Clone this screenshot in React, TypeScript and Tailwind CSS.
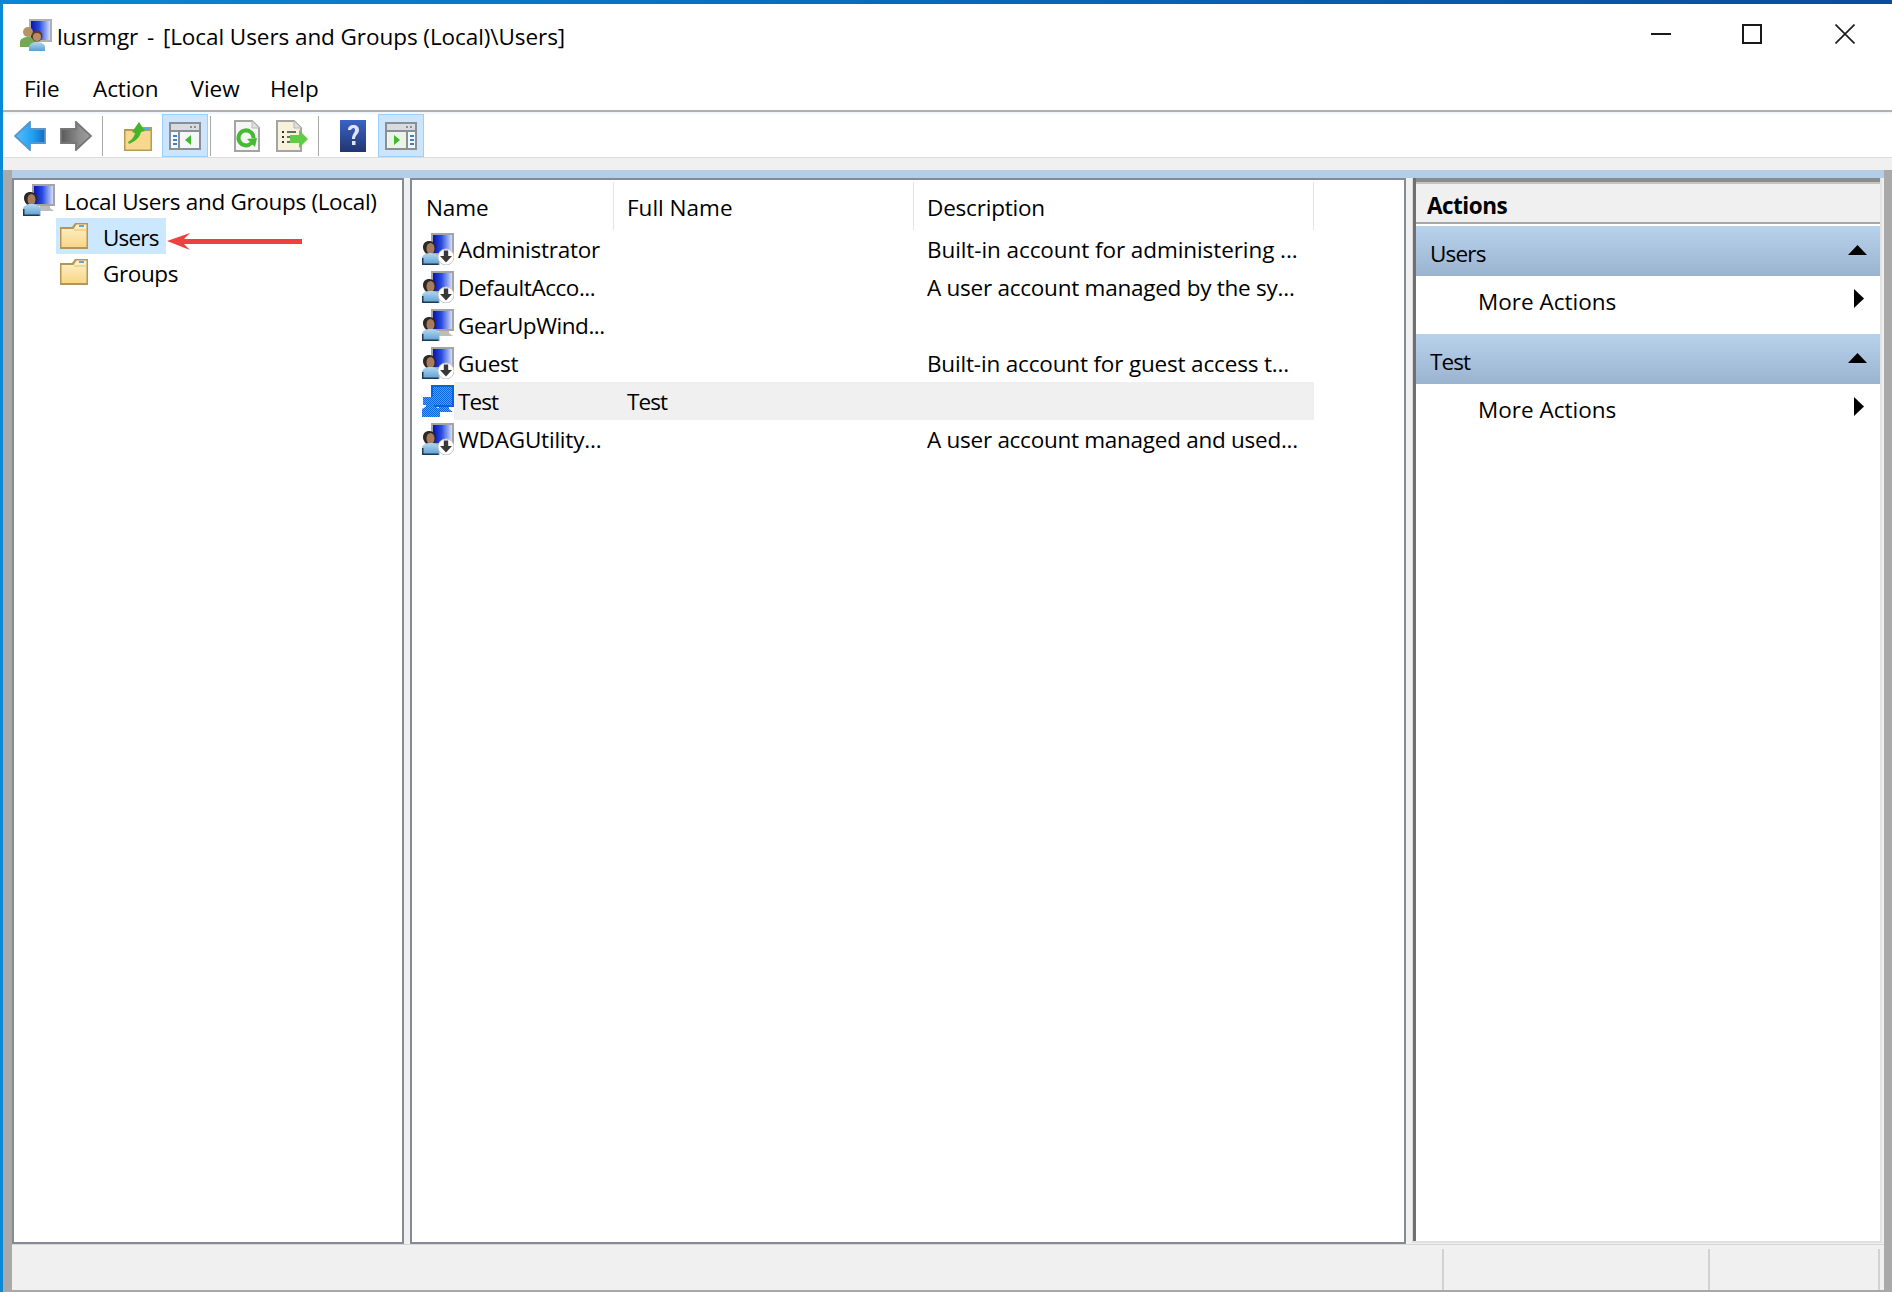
const Monitor = ({ dithered = false }: { dithered?: boolean }) => (
  <>
    <rect x="9" y="0" width="23" height="22" fill={dithered ? "#0a62d8" : "#a4a4a4"} />
    <rect x="11" y="2" width="19" height="18" fill={dithered ? "url(#dither)" : "url(#screen)"} />
    <path d="M17 22h10v2l4 3H15l2-3z" fill={dithered ? "url(#dither)" : "#bdbdbd"} />
  </>
);

const Defs = () => (
  <defs>
    <linearGradient id="screen" x1="0" x2="1" y1="0" y2="0">
      <stop offset="0" stopColor="#0a12b0" />
      <stop offset="0.45" stopColor="#2a4ee0" />
      <stop offset="1" stopColor="#d4dcfb" />
    </linearGradient>
    <linearGradient id="shirt" x1="0" x2="0" y1="0" y2="1">
      <stop offset="0" stopColor="#b4d8f0" />
      <stop offset="1" stopColor="#5a9ed2" />
    </linearGradient>
    <pattern id="dither" width="2" height="2" patternUnits="userSpaceOnUse">
      <rect width="2" height="2" fill="#0a66dc" />
      <rect width="1" height="1" fill="#5c9ce8" />
      <rect x="1" y="1" width="1" height="1" fill="#5c9ce8" />
    </pattern>
  </defs>
);

const UserIcon = ({ badge = false, dithered = false }: { badge?: boolean; dithered?: boolean }) => (
  <svg width="32" height="32" viewBox="0 0 32 32" className="shrink-0">
    <Defs />
    <Monitor dithered={dithered} />
    {dithered ? (
      <>
        <path d="M1 12h13v8h-3v2H4v-2H1z" fill="url(#dither)" />
        <path d="M0 32v-8l5-3h7l6 3v8z" fill="url(#dither)" />
      </>
    ) : (
      <>
        <path d="M1 14c0-4 3-6 6-6s7 2 7 6-2 8-6 8-7-4-7-8z" fill="#2e2822" />
        <ellipse cx="8.500" cy="15.500" rx="4" ry="5.500" fill="#a87c5e" />
        <path d="M0 32v-7c0-3 4-5 8.500-5s9 2 9 5v7z" fill="url(#shirt)" />
        <path d="M0 32v-7h1.500v5.500h15V32z" fill="#1e3a52" />
      </>
    )}
    {badge && (
      <>
        <circle cx="24" cy="24" r="8" fill="#ffffff" stroke="#c8c8c8" />
        <path d="M21.800 17.500h4.400v5.500h3.800l-6 6.500-6-6.500h3.800z" fill="#383838" />
      </>
    )}
  </svg>
);

const TitleIcon = () => (
  <svg width="32" height="32" viewBox="0 0 32 32" className="shrink-0">
    <Defs />
    <rect x="9" y="0" width="23" height="23" fill="#b0b0b0" />
    <rect x="11" y="2" width="19" height="19" fill="url(#screen)" />
    <circle cx="8" cy="13" r="5" fill="#b89260" />
    <path d="M0 28v-5c0-3 4-5 8-5s8 2 8 5v5z" fill="#74a856" />
    <circle cx="17" cy="17" r="5.500" fill="#5c3c24" />
    <circle cx="17" cy="18" r="4" fill="#b98c68" />
    <path d="M9 32v-4c0-3 4-5 8-5s8 2 8 5v4z" fill="url(#shirt)" />
  </svg>
);

const FolderIcon = () => (
  <svg width="28" height="26" viewBox="0 0 28 26" className="shrink-0">
    <defs>
      <linearGradient id="folder" x1="0" x2="0" y1="0" y2="1">
        <stop offset="0" stopColor="#fff2c8" />
        <stop offset="1" stopColor="#f8d68a" />
      </linearGradient>
    </defs>
    <path d="M0 4h12l3-4h13v26H0z" fill="#b4955a" />
    <path d="M1.500 6h12l3-4.500h10V24h-25z" fill="url(#folder)" />
    <rect x="19" y="2" width="5" height="2" fill="#58a8e8" />
    <path d="M14 7h12.500" stroke="#e4c070" />
  </svg>
);

const NavArrow = ({ forward = false }: { forward?: boolean }) => (
  <svg width="32" height="30" viewBox="0 0 32 30" className="shrink-0">
    <defs>
      <linearGradient id="navBlue" x1="0" x2="1" y1="0" y2="0">
        <stop offset="0" stopColor="#58c0fa" />
        <stop offset="0.6" stopColor="#1ea0f2" />
        <stop offset="1" stopColor="#1668c0" />
      </linearGradient>
      <linearGradient id="navGray" x1="0" x2="1" y1="0" y2="0">
        <stop offset="0" stopColor="#5a5a5a" />
        <stop offset="0.6" stopColor="#8c8c8c" />
        <stop offset="1" stopColor="#a0a0a0" />
      </linearGradient>
    </defs>
    {forward ? (
      <path d="M16 1l15 14-15 14v-7H1V8h15z" fill="url(#navGray)" stroke="#777777" strokeWidth="1.800" />
    ) : (
      <path d="M16 1L1 15l15 14v-7h15V8H16z" fill="url(#navBlue)" stroke="#5a96cc" strokeWidth="1.800" />
    )}
  </svg>
);

const UpFolderIcon = () => (
  <svg width="28" height="30" viewBox="0 0 28 30" className="shrink-0">
    <path d="M0 8h14l2-2h12v24H0z" fill="#b89a58" />
    <path d="M1.500 10h25v18.500h-25z" fill="#f8d88c" />
    <rect x="20" y="7" width="5" height="2" fill="#58a8e8" />
    <path d="M4 21c4-2 6-5 7-9l-3-1 7-10 6 9-4 1c-1 5-5 9-12 12z" fill="#46b42a" />
  </svg>
);

const PaneIcon = ({ right = false }: { right?: boolean }) => (
  <svg width="32" height="28" viewBox="0 0 32 28" className="shrink-0">
    <rect x="1" y="1" width="30" height="26" fill="#f4f6f8" stroke="#8a8f96" strokeWidth="2" />
    <rect x="2" y="2" width="28" height="6" fill="#d8dbe0" />
    <rect x="2" y="8" width="28" height="2" fill="#8a8f96" />
    <rect x="21" y="4" width="2" height="2" fill="#8a8f96" />
    <rect x="25" y="4" width="2" height="2" fill="#8a8f96" />
    {right ? (
      <>
        <rect x="3" y="10" width="18" height="16" fill="#eaf3e6" />
        <rect x="21" y="10" width="2" height="16" fill="#8a8f96" />
        <rect x="25" y="13" width="4" height="2" fill="#3a82d0" />
        <rect x="25" y="17" width="4" height="2" fill="#3a82d0" />
        <rect x="25" y="21" width="4" height="2" fill="#3a82d0" />
        <path d="M9 13l6 5-6 5z" fill="#3fb82c" />
      </>
    ) : (
      <>
        <rect x="9" y="10" width="2" height="16" fill="#8a8f96" />
        <rect x="4" y="13" width="4" height="2" fill="#3a82d0" />
        <rect x="4" y="17" width="4" height="2" fill="#3a82d0" />
        <rect x="4" y="21" width="4" height="2" fill="#3a82d0" />
        <path d="M22 13l-6 5 6 5z" fill="#3fb82c" />
      </>
    )}
  </svg>
);

const RefreshIcon = () => (
  <svg width="26" height="32" viewBox="0 0 26 32" className="shrink-0">
    <path d="M1 1h17l7 7v23H1z" fill="#f6f6f4" stroke="#a4a4a4" strokeWidth="2" />
    <path d="M18 1v7h7" fill="#e0e0e0" stroke="#b8b8b8" />
    <path d="M17.500 23a7.500 7.500 0 1 1 2-5" fill="none" stroke="#46ba32" strokeWidth="4" />
    <path d="M13 19l10-1-2 9z" fill="#46ba32" />
  </svg>
);

const ExportIcon = () => (
  <svg width="32" height="32" viewBox="0 0 32 32" className="shrink-0">
    <path d="M1 1h17l7 7v23H1z" fill="#f6f2dc" stroke="#a4a4a4" strokeWidth="2" />
    <path d="M18 1v7h7" fill="#e0e0e0" stroke="#b8b8b8" />
    <path d="M6 12h2M6 17h2M6 22h2" stroke="#303030" strokeWidth="2" />
    <path d="M11 12h9M11 17h5M11 22h5" stroke="#6a6a6a" strokeWidth="2" />
    <path d="M14 15h9v-5l9 9-9 9v-5h-9z" fill="#62cc46" />
  </svg>
);

const HelpIcon = () => (
  <svg width="26" height="32" viewBox="0 0 26 32" className="shrink-0">
    <defs>
      <linearGradient id="helpBook" x1="0" x2="0" y1="0" y2="1">
        <stop offset="0" stopColor="#3a62c8" />
        <stop offset="1" stopColor="#22366e" />
      </linearGradient>
    </defs>
    <rect width="26" height="32" fill="url(#helpBook)" />
    <path
      d="M8 10c0-3 2-5 5.500-5S19 7 19 10c0 4-4 5-4 9h-3c0-5 3-6 3-9 0-1-.5-2-1.500-2S11 9 11 10z"
      fill="#e0e4f4"
    />
    <rect x="12" y="21" width="3.500" height="4" fill="#e0e4f4" />
  </svg>
);

const Separator = () => <div className="w-px h-[40px] bg-[#a8a8a8] shrink-0" />;

const TriangleUp = () => (
  <svg width="19" height="10" viewBox="0 0 19 10" className="shrink-0">
    <path d="M9.500 0L19 10H0z" fill="#000000" />
  </svg>
);

const TriangleRight = () => (
  <svg width="10" height="19" viewBox="0 0 10 19" className="shrink-0">
    <path d="M0 0l10 9.500L0 19z" fill="#000000" />
  </svg>
);

const ActionGroup = ({ title, track }: { title: string; track: string }) => (
  <div>
    <div className="h-[50px] flex items-center justify-between pl-[14px] pr-[13px] bg-linear-to-b from-[#b9d2ec] to-[#9ab3cf]">
      <span className={`pt-[6px] ${track}`}>{title}</span>
      <span className="pb-[2px] flex">
        <TriangleUp />
      </span>
    </div>
    <div className="h-[58px] flex items-center justify-between pl-[62px] pr-[16px] pb-[6px]">
      <span>More Actions</span>
      <span className="pb-[8px] flex">
        <TriangleRight />
      </span>
    </div>
  </div>
);

const rows = [
  { name: "Administrator", track: "tracking-[-0.25px]", full: "", desc: "Built-in account for administering ...", descTrack: "tracking-[-0.08px]", badge: true },
  { name: "DefaultAcco...", track: "tracking-[-0.45px]", full: "", desc: "A user account managed by the sy...", descTrack: "tracking-[-0.25px]", badge: true },
  { name: "GearUpWind...", track: "tracking-[-0.45px]", full: "", desc: "", descTrack: "", badge: false },
  { name: "Guest", track: "tracking-[-0.25px]", full: "", desc: "Built-in account for guest access t...", descTrack: "tracking-[-0.17px]", badge: true },
  { name: "Test", track: "tracking-[-0.9px]", full: "Test", desc: "", descTrack: "", selected: true },
  { name: "WDAGUtility...", track: "tracking-[-0.2px]", full: "", desc: "A user account managed and used...", descTrack: "tracking-[-0.27px]", badge: true },
];

export default function App() {
  return (
    <div
      className="w-[1892px] h-[1292px] flex flex-col bg-white text-[22.5px] leading-none text-black overflow-hidden"
      style={{ fontFamily: '"Open Sans", "Noto Sans", sans-serif' }}
    >
      <div className="h-[4px] shrink-0 bg-linear-to-r from-[#0a86d6] to-[#0a4c9e]" />
      <div className="flex-1 flex min-h-0">
        <div className="w-[3px] shrink-0 bg-[#0a8ad4]" />
        <div className="flex-1 flex flex-col min-w-0">
          {/* title bar */}
          <div className="h-[62px] shrink-0 flex items-center pl-[17px]">
            <TitleIcon />
            <span className="ml-[5px] pt-[4px] whitespace-pre tracking-[-0.07px]">
              lusrmgr<span className="mx-[3px]"> - </span>[Local Users and Groups (Local)\Users]
            </span>
            <div className="ml-auto flex items-center h-full pb-[2px]">
              <svg width="20" height="20" viewBox="0 0 20 20" className="mr-[71px]">
                <rect y="9" width="20" height="2" fill="#1a1a1a" />
              </svg>
              <svg width="20" height="20" viewBox="0 0 20 20" className="mr-[73px]">
                <rect x="1" y="1" width="18" height="18" fill="none" stroke="#1a1a1a" strokeWidth="2" />
              </svg>
              <svg width="20" height="20" viewBox="0 0 20 20" className="mr-[37px]">
                <path d="M0.500 0.500l19 19M19.500 0.500l-19 19" stroke="#1a1a1a" strokeWidth="1.600" />
              </svg>
            </div>
          </div>

          {/* menu */}
          <div className="h-[44px] shrink-0 flex items-center pl-[21px] pt-[3px]">
            <span className="w-[69px]">File</span>
            <span className="w-[97.500px] tracking-[-0.1px]">Action</span>
            <span className="w-[79.500px]">View</span>
            <span>Help</span>
          </div>
          <div className="h-[2px] shrink-0 bg-[#b0b0b0]" />

          {/* toolbar */}
          <div className="h-[46px] shrink-0 flex items-center pl-[11px] bg-white border-t-2 border-t-[#f3f7fc] border-b border-b-[#dcdcdc]">
            <NavArrow />
            <span className="ml-[14px] flex">
              <NavArrow forward />
            </span>
            <span className="ml-[10px] flex">
              <Separator />
            </span>
            <span className="ml-[21px] flex">
              <UpFolderIcon />
            </span>
            <span className="ml-[10px] w-[46px] h-[43px] flex items-center justify-center bg-[#cce4fc] border border-[#99d0ff]">
              <PaneIcon />
            </span>
            <span className="ml-[2px] flex">
              <Separator />
            </span>
            <span className="ml-[23px] flex">
              <RefreshIcon />
            </span>
            <span className="ml-[16px] flex">
              <ExportIcon />
            </span>
            <span className="ml-[10px] flex">
              <Separator />
            </span>
            <span className="ml-[21px] flex">
              <HelpIcon />
            </span>
            <span className="ml-[12px] w-[46px] h-[43px] flex items-center justify-center bg-[#cce4fc] border border-[#99d0ff]">
              <PaneIcon right />
            </span>
          </div>
          <div className="h-[12px] shrink-0 bg-[#f0f0f0]" />

          {/* console body */}
          <div className="flex-1 flex min-h-0 border-b-2 border-b-[#a8a8a8]">
            <div className="w-[9px] shrink-0 bg-[#a9a9a9]" />
            <div className="flex-1 flex flex-col min-w-0 bg-[#f0f0f0]">
              <div className="h-[8px] shrink-0 bg-[#b5cee8]" />
              <div className="flex-1 flex min-h-0">
                {/* tree */}
                <div className="w-[392px] shrink-0 bg-white border-2 border-[#858a94]">
                  <div className="h-[38px] flex items-center pl-[9px] pt-[2px]">
                    <UserIcon />
                    <span className="ml-[9px] pt-[4px] whitespace-nowrap tracking-[-0.32px]">
                      Local Users and Groups (Local)
                    </span>
                  </div>
                  <div className="relative ml-[42px] w-[110px] h-[36px] flex items-center pl-[4px] bg-[#cce8ff]">
                    <FolderIcon />
                    <span className="ml-[15px] pt-[4px] tracking-[-0.8px]">Users</span>
                    <svg
                      width="136"
                      height="18"
                      viewBox="0 0 136 18"
                      className="absolute left-[111px] top-[14px]"
                    >
                      <path d="M0 9l23-8-6 6 118 0v5H17l6 6z" fill="#ee4040" />
                    </svg>
                  </div>
                  <div className="ml-[42px] h-[36px] flex items-center pl-[4px]">
                    <FolderIcon />
                    <span className="ml-[15px] pt-[4px] tracking-[-0.4px]">Groups</span>
                  </div>
                </div>

                {/* list */}
                <div className="ml-[6px] w-[996px] shrink-0 bg-white border-2 border-[#858a94]">
                  <div className="h-[50px] flex pt-[2px]">
                    <div className="w-[202px] flex items-center pl-[14px] pt-[4px] tracking-[-0.1px] border-r border-r-[#e4e4e4]">
                      Name
                    </div>
                    <div className="w-[300px] flex items-center pl-[13px] pt-[4px] border-r border-r-[#e4e4e4]">
                      Full Name
                    </div>
                    <div className="w-[400px] flex items-center pl-[13px] pt-[4px] tracking-[-0.2px] border-r border-r-[#e4e4e4]">
                      Description
                    </div>
                  </div>
                  {rows.map((row) => (
                    <div key={row.name} className="h-[38px] flex items-center pl-[10px]">
                      <UserIcon badge={row.badge} dithered={row.selected} />
                      <div className={`h-full w-[860px] flex items-center ${row.selected ? "bg-[#f0f0f0]" : ""}`}>
                        <span className={`w-[160px] pl-[4px] pt-[2px] whitespace-nowrap ${row.track}`}>{row.name}</span>
                        <span className="w-[300px] pl-[13px] pt-[2px] whitespace-nowrap tracking-[-0.9px]">
                          {row.full}
                        </span>
                        <span className={`w-[400px] pl-[13px] pt-[2px] whitespace-nowrap ${row.descTrack}`}>
                          {row.desc}
                        </span>
                      </div>
                    </div>
                  ))}
                </div>

                {/* actions */}
                <div className="ml-[6px] flex-1 min-w-0 pr-[2px] pb-[1px]">
                  <div className="h-full flex flex-col border-l border-l-[#d8d8d8] border-b-2 border-b-[#e0e0e0]">
                    <div className="flex-1 flex flex-col bg-white border-l-[3px] border-l-[#707070] border-r-2 border-r-[#e4e4e4]">
                      <div className="h-[4px] bg-[#8c8c8c]" />
                      <div className="h-[2px] bg-[#c4c4c4]" />
                      <div className="h-[38px] flex items-center pl-[11px] pt-[6px] bg-[#f0f0f0] font-bold tracking-[-0.5px]">
                        Actions
                      </div>
                      <div className="h-[2px] bg-[#a8a8a8]" />
                      <div className="h-[2px]" />
                      <ActionGroup title="Users" track="tracking-[-0.8px]" />
                      <ActionGroup title="Test" track="tracking-[-0.9px]" />
                    </div>
                  </div>
                </div>
              </div>

              {/* status bar */}
              <div className="h-[46px] shrink-0 flex pt-[4px] border-t border-t-[#d6d6d6]">
                <div className="flex-1 border-r-2 border-r-[#d2d2d2]" />
                <div className="w-[266px] border-r-2 border-r-[#d2d2d2]" />
                <div className="w-[170px] border-r-2 border-r-[#d2d2d2]" />
                <div className="w-[4px]" />
              </div>
            </div>
            <div className="w-[8px] shrink-0 bg-[#a9a9a9]" />
          </div>
        </div>
      </div>
    </div>
  );
}
